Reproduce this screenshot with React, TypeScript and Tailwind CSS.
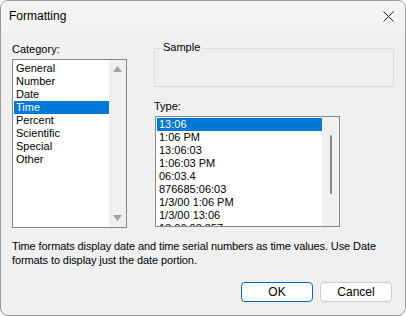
import React from "react";

const categories = ["General", "Number", "Date", "Time", "Percent", "Scientific", "Special", "Other"];
const types = [
  "13:06",
  "1:06 PM",
  "13:06:03",
  "1:06:03 PM",
  "06:03.4",
  "876685:06:03",
  "1/3/00 1:06 PM",
  "1/3/00 13:06",
  "13:06:03.357",
];

const ui = { fontFamily: '"Liberation Sans", Arial, sans-serif' };

export default function App() {
  return (
    <div className="h-[316px] w-[406px] bg-white">
      <div
        className="flex h-[316px] w-[406px] flex-col overflow-hidden rounded-lg border border-[#9a9a9a] bg-[#f0f0f0] text-black"
        style={ui}
      >
        {/* Title bar */}
        <div className="flex h-[30px] shrink-0 items-center justify-between bg-[#f3f3f3] pl-[8px] pr-[10px]">
          <span className="text-[12px]">Formatting</span>
          <svg width="11" height="11" viewBox="0 0 11 11" className="mr-[1px]">
            <path d="M0.5 0.5 L10.5 10.5 M10.5 0.5 L0.5 10.5" stroke="#1a1a1a" strokeWidth="1" />
          </svg>
        </div>

        {/* Body */}
        <div className="flex gap-[27px] pl-[11px] pt-[12px]">
          {/* Category */}
          <div className="flex flex-col">
            <div className="h-[13px] text-[11px] leading-[13px]">Category:</div>
            <div className="mt-[3px] flex h-[169px] w-[115px] border border-[#828790] bg-white">
              <div className="flex-1 pl-[1px] pt-[2px]">
                {categories.map((c) => (
                  <div
                    key={c}
                    className={`h-[13px] pl-[2px] text-[11px] leading-[13px] ${
                      c === "Time" ? "bg-[#0078d7] text-white" : ""
                    }`}
                  >
                    {c}
                  </div>
                ))}
              </div>
              <div className="flex w-[17px] flex-col items-center justify-between bg-[#f0f0f0] py-[6px]">
                <svg width="9" height="6" viewBox="0 0 9 6">
                  <path d="M4.5 0 L9 6 L0 6 Z" fill="#a3a3a3" />
                </svg>
                <svg width="9" height="6" viewBox="0 0 9 6">
                  <path d="M0 0 L9 0 L4.5 6 Z" fill="#a3a3a3" />
                </svg>
              </div>
            </div>
          </div>

          {/* Right side */}
          <div className="flex flex-col pt-[5px]">
            <div className="relative h-[39px] w-[240px] border border-[#dcdcdc]">
              <span className="absolute -top-[8px] left-[6px] bg-[#f0f0f0] px-[2px] text-[11px] leading-[13px]">
                Sample
              </span>
            </div>
            <div className="mt-[13px] h-[13px] text-[11px] leading-[13px]">Type:</div>
            <div className="ml-[1px] mt-[3px] flex h-[111px] w-[185px] overflow-hidden border border-[#828790] bg-white">
              <div className="flex-1 pl-[1px] pt-[1px]">
                {types.map((t, i) => (
                  <div
                    key={t}
                    className={`h-[13px] whitespace-nowrap pl-[2px] text-[11px] leading-[13px] ${
                      i === 0 ? "bg-[#0078d7] text-white" : ""
                    }`}
                  >
                    {t}
                  </div>
                ))}
              </div>
              <div className="flex w-[17px] justify-center bg-[#f0f0f0] pt-[18px]">
                <div className="h-[59px] w-[2px] rounded-full bg-[#858585]" />
              </div>
            </div>
          </div>
        </div>

        {/* Description */}
        <p className="mt-[11px] whitespace-nowrap pl-[11px] text-[11px] leading-[14px] tracking-[-0.1px]">
          Time formats display date and time serial numbers as time values. Use Date
          <br />
          formats to display just the date portion.
        </p>

        {/* Buttons */}
        <div className="mt-auto flex justify-end gap-[7px] pb-[13px] pr-[13px]">
          <button className="h-[20px] w-[72px] rounded-[4px] border border-[#0067c0] bg-[#fdfdfd] text-[12px] leading-none">
            OK
          </button>
          <button className="h-[20px] w-[72px] rounded-[4px] border border-[#d0d0d0] bg-[#fdfdfd] text-[12px] leading-none">
            Cancel
          </button>
        </div>
      </div>
    </div>
  );
}
